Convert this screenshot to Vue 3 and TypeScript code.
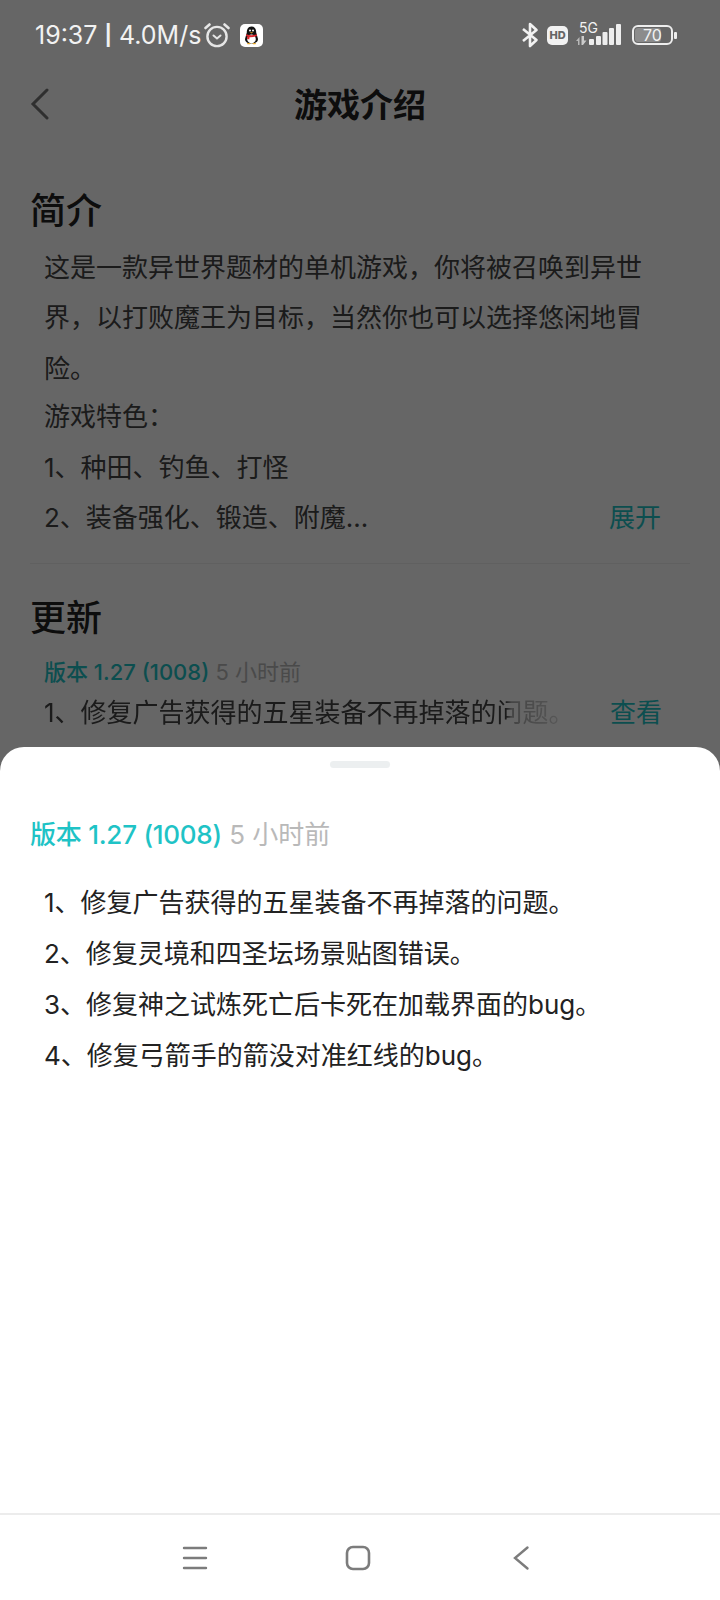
<script setup lang="ts">
const intro = [
  '这是一款异世界题材的单机游戏，你将被召唤到异世',
  '界，以打败魔王为目标，当然你也可以选择悠闲地冒',
  '险。',
  '游戏特色：',
  '1、种田、钓鱼、打怪',
]

const changes = [
  '1、修复广告获得的五星装备不再掉落的问题。',
  '2、修复灵境和四圣坛场景贴图错误。',
  '3、修复神之试炼死亡后卡死在加载界面的bug。',
  '4、修复弓箭手的箭没对准红线的bug。',
]
</script>

<template>
  <div class="screen">
    <div class="page">
      <div class="status-spacer"></div>
      <header class="nav">
        <svg class="nav-back" width="20" height="32" viewBox="0 0 20 32">
          <path d="M17 2 L3 16 L17 30" fill="none" stroke="#777" stroke-width="3" stroke-linecap="round" />
        </svg>
        <h1>游戏介绍</h1>
      </header>

      <section class="intro">
        <h2>简介</h2>
        <div class="lines">
          <p v-for="line in intro" :key="line" class="line">{{ line }}</p>
          <div class="line row">
            <span>2、装备强化、锻造、附魔...</span>
            <a>展开</a>
          </div>
        </div>
      </section>

      <section class="update">
        <h2>更新</h2>
        <div class="version small"><b>版本 1.27 (1008)</b> <span>5 小时前</span></div>
        <div class="line row">
          <span class="fade">1、修复广告获得的五星装备不再掉落的问题。</span>
          <a>查看</a>
        </div>
      </section>
    </div>

    <div class="scrim"></div>

    <div class="status">
      <div class="status-left">
        <span class="clock">19:37 <i>|</i> 4.0M/s</span>
        <svg class="alarm" width="26" height="26" viewBox="0 0 26 26" fill="none" stroke="#e6e6e6" stroke-linecap="round">
          <circle cx="13" cy="14.500" r="9.600" stroke-width="2.400" />
          <path d="M1.500 6 L5.500 2.500 M24.500 6 L20.500 2.500" stroke-width="2.600" />
          <path d="M9.500 13.500 L13 16.500 L16.500 13.500" stroke-width="2" />
        </svg>
        <svg class="qq" width="23" height="23" viewBox="0 0 23 23">
          <rect width="23" height="23" rx="5" fill="#fff" />
          <path d="M11.500 2.500 C7.800 2.500 6.800 5.800 6.800 8.500 L5 15 C5 17.500 7 19.500 11.500 19.500 C16 19.500 18 17.500 18 15 L16.200 8.500 C16.200 5.800 15.200 2.500 11.500 2.500 Z" fill="#111" />
          <ellipse cx="11.500" cy="15" rx="4.300" ry="4.400" fill="#fff" />
          <circle cx="10" cy="6.500" r="1" fill="#fff" />
          <circle cx="13" cy="6.500" r="1" fill="#fff" />
          <path d="M9.800 8.300 H13.200 L11.500 9.600 Z" fill="#e8a92c" />
          <path d="M6.300 10.300 Q11.500 12.300 16.700 10.300 L17 12 Q13 13.500 9.500 13.200 L9.300 15.500 L7 14.800 L7.500 12.600 L6 12 Z" fill="#d8262c" />
          <path d="M7 19 H10.500 L10 20.300 H7.500 Z M12.500 19 H16 L15.500 20.300 H13 Z" fill="#e8a92c" />
        </svg>
      </div>
      <div class="status-right">
        <svg width="18" height="26" viewBox="0 0 18 26" fill="none" stroke="#f2f2f2" stroke-width="2.600">
          <path d="M2 7 L15.500 18 L9 24 V2 L15.500 8 L2 19" stroke-linejoin="round" />
        </svg>
        <span class="hd">HD</span>
        <div class="signal">
          <span class="five-g">5G</span>
          <svg width="45" height="21" viewBox="0 0 45 21" fill="#eee">
            <path d="M0 17 L3.500 13 V21 H2 V17 Z" opacity=".6" />
            <path d="M5.500 12 H8 V16.500 H10.500 L7 21 H5.500 Z" opacity=".75" />
            <rect x="13" y="15" width="5" height="6" rx="1" />
            <rect x="20" y="12" width="5" height="9" rx="1" />
            <rect x="26.500" y="8" width="5" height="13" rx="1" />
            <rect x="33" y="4" width="5" height="17" rx="1" />
            <rect x="40" y="0" width="5" height="21" rx="1" />
          </svg>
        </div>
        <div class="battery">
          <div class="battery-body">
            <div class="battery-fill"></div>
            <span>70</span>
          </div>
          <div class="battery-cap"></div>
        </div>
      </div>
    </div>

    <div class="sheet">
      <div class="handle"></div>
      <div class="version"><b>版本 1.27 (1008)</b> <span>5 小时前</span></div>
      <ul class="changes">
        <li v-for="item in changes" :key="item">{{ item }}</li>
      </ul>
      <div class="bottom-nav">
        <svg width="26" height="24" viewBox="0 0 26 24" stroke="#7c7c7c" stroke-width="2.400" stroke-linecap="round">
          <path d="M2 2 H24 M2 12 H24 M2 22 H24" />
        </svg>
        <svg width="26" height="26" viewBox="0 0 26 26" fill="none" stroke="#7c7c7c" stroke-width="2.600">
          <rect x="2" y="2" width="22" height="22" rx="6" />
        </svg>
        <svg width="26" height="26" viewBox="0 0 26 26" fill="none" stroke="#7c7c7c" stroke-width="2.400" stroke-linecap="round">
          <path d="M19.500 2.500 L7 13 L19.500 23.500" />
        </svg>
      </div>
    </div>
  </div>
</template>

<style>
html, body {
  margin: 0;
  background: #fff;
}
</style>

<style scoped>
.screen {
  position: relative;
  width: 720px;
  height: 1600px;
  overflow: hidden;
  background: #fff;
  color: #444;
  font-family: "Inter", "Noto Sans CJK SC", sans-serif;
}

.status-spacer {
  height: 70px;
}

.nav {
  position: relative;
  height: 66px;
  display: flex;
  align-items: center;
  justify-content: center;
}

.nav-back {
  position: absolute;
  left: 30px;
  top: 18px;
}

h1 {
  margin: 0;
  font-size: 33px;
  font-weight: 700;
  color: #222;
}

.intro {
  margin: 50px 30px 0;
  padding-bottom: 20px;
  border-bottom: 1px solid #f0f0f0;
}

h2 {
  margin: 0;
  font-size: 36px;
  line-height: 50px;
  font-weight: 500;
  color: #222;
}

.lines {
  margin-top: 7px;
}

.lines p:nth-child(3) {
  margin-bottom: -2px;
}

.line {
  margin: 0;
  padding: 0 29px 0 14px;
  font-size: 26px;
  line-height: 50.400px;
  white-space: nowrap;
}

.row {
  display: flex;
  justify-content: space-between;
}

.row a {
  color: #1fc3c6;
}

.update {
  margin-top: 29px;
  padding: 0 29px 0 30px;
}

.version {
  font-size: 26px;
  line-height: 36px;
}

.version b {
  font-weight: 500;
  letter-spacing: -0.25px;
  color: #1fc3c6;
}

.version span {
  color: #b9b9b9;
}

.version.small {
  margin-top: 13px;
  padding-left: 14px;
  font-size: 22px;
  line-height: 32px;
}

.version.small b {
  letter-spacing: 0;
}

.fade {
  flex: none;
  -webkit-mask-image: linear-gradient(to right, #000 87%, rgba(0, 0, 0, .45) 88%, rgba(0, 0, 0, .2) 97%, transparent 100%);
  mask-image: linear-gradient(to right, #000 87%, rgba(0, 0, 0, .45) 88%, rgba(0, 0, 0, .2) 97%, transparent 100%);
}

.scrim {
  position: absolute;
  inset: 0;
  background: rgba(0, 0, 0, 0.6);
}

.status {
  position: absolute;
  left: 0;
  right: 0;
  top: 0;
  height: 70px;
  padding: 0 43px 0 35px;
  box-sizing: border-box;
  display: flex;
  justify-content: space-between;
  align-items: center;
  color: #f2f2f2;
}

.status-left {
  display: flex;
  align-items: center;
  font-size: 25px;
}

.clock i {
  font-style: normal;
  font-size: 20px;
  font-weight: 700;
  vertical-align: 2px;
}

.alarm {
  margin-left: 3px;
}

.qq {
  margin-left: 10px;
}

.status-right {
  display: flex;
  align-items: center;
  gap: 8px;
}

.hd {
  width: 21px;
  height: 19px;
  border-radius: 5px;
  background: #f2f2f2;
  color: #666;
  font-size: 11px;
  line-height: 19px;
  font-weight: 800;
  text-align: center;
}

.signal {
  position: relative;
  width: 45px;
  height: 32px;
}

.signal svg {
  position: absolute;
  left: 0;
  bottom: 6px;
}

.five-g {
  position: absolute;
  left: 3px;
  top: 0;
  font-size: 14px;
  line-height: 17px;
}

.battery {
  display: flex;
  align-items: center;
  gap: 1px;
  margin-left: 3px;
}

.battery-body {
  position: relative;
  box-sizing: border-box;
  width: 41px;
  height: 20px;
  border: 2px solid #eee;
  border-radius: 6px;
  text-align: center;
  font-size: 16px;
  line-height: 16px;
}

.battery-fill {
  position: absolute;
  left: 1px;
  top: 1px;
  bottom: 1px;
  width: 70%;
  background: #8c8c8c;
  border-radius: 3px;
}

.battery-body span {
  position: relative;
}

.battery-cap {
  width: 3px;
  height: 7px;
  background: #eee;
  border-radius: 1px;
}

.sheet {
  position: absolute;
  left: 0;
  right: 0;
  top: 747px;
  bottom: 0;
  background: #fff;
  border-radius: 24px 24px 0 0;
  padding: 0 30px;
  box-sizing: border-box;
  display: flex;
  flex-direction: column;
  color: #222;
}

.handle {
  width: 60px;
  height: 7px;
  margin: 14px auto 0;
  border-radius: 4px;
  background: #eceff0;
}

.sheet .version {
  margin-top: 49px;
}

.changes {
  list-style: none;
  margin: 24px 0 0;
  padding: 0 0 0 14px;
  font-size: 26px;
  line-height: 51px;
}

.bottom-nav {
  margin: auto -30px 0;
  height: 85px;
  border-top: 2px solid #ececec;
  display: flex;
  align-items: center;
  gap: 137px;
  padding: 0 182px;
}
</style>
